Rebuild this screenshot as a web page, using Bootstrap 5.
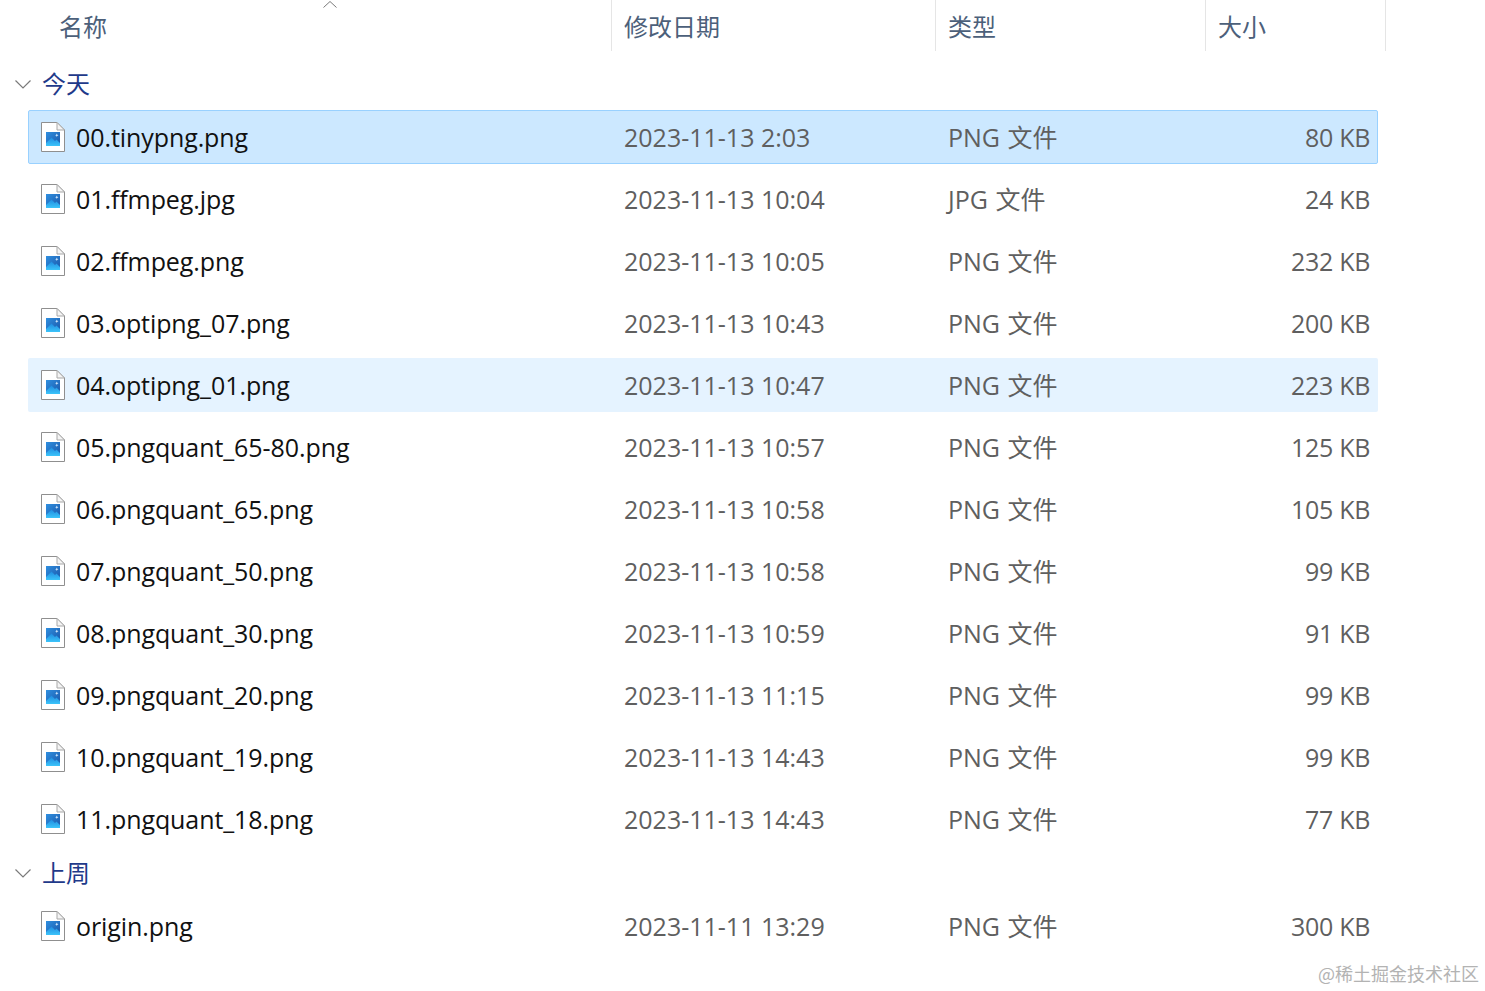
<!DOCTYPE html>
<html lang="zh"><head><meta charset="utf-8"><title>文件列表</title>
<link href="https://cdn.jsdelivr.net/npm/bootstrap@5.3.0/dist/css/bootstrap.min.css" rel="stylesheet">
<style>
html,body{height:100%;overflow:hidden}
body{background:#fff;font-family:"Open Sans","Noto Sans CJK SC",sans-serif;font-size:25px;position:relative}
.fx-head{height:51px;padding-left:28px;color:#4c607a;font-size:24px}
.fx-head>div{height:51px;padding-top:9px;line-height:36px;border-right:1px solid #e5e5e5}
.c-name{width:584px;padding-left:31px;position:relative}
.c-date{width:324px;padding-left:12px}
.c-type{width:270px;padding-left:12px}
.c-size{width:180px;padding-left:12px}
.fx-sort{position:absolute;left:295px;top:1px}
.fx-group{height:53px;color:#1f3a8a;font-size:24px;padding-left:15px;padding-top:1px;gap:11px;line-height:1}
.fx-first{height:59px;padding-top:7px}
.fx-rows{display:flex;flex-direction:column;gap:8px;margin-left:28px;width:1350px}
.fx-row{height:54px;border:1px solid transparent;border-radius:2px;color:#5f5f5f;font-size:25px}
.fx-sel{background:#cce8ff;border-color:#99d1ff}
.fx-hov{background:#e5f3ff}
.r-name{width:584px;padding-left:12px;gap:11px;color:#111;letter-spacing:-.08px}
.r-name span,.r-date,.r-type,.r-size{padding-top:2px}
.r-date{width:324px;padding-left:11px}
.r-type{width:270px;padding-left:11px;word-spacing:1px}
.r-size{width:170px;padding-right:7px;text-align:right;letter-spacing:-.3px}
.fx-mark{position:absolute;right:6px;bottom:6px;color:#b3b3b3;font-family:"Noto Sans CJK SC",sans-serif;font-size:18px;line-height:1.2}
</style></head><body>
<svg width="0" height="0" class="position-absolute"><defs>
<linearGradient id="sky" x1="0" y1="0" x2="1" y2="1"><stop offset="0" stop-color="#2f8fe0"/><stop offset="1" stop-color="#1a56a8"/></linearGradient>
<linearGradient id="hill" x1="0" y1="0" x2="0" y2="1"><stop offset="0" stop-color="#1f8be0"/><stop offset="1" stop-color="#3cc4fa"/></linearGradient>
<symbol id="fi" viewBox="0 0 24 30">
<path d="M.5.5H16L23.5 8V29.5H.5Z" fill="#fff" stroke="#8f8f8f"/><path d="M16 .5V8H23.5Z" fill="#f4f4f4" stroke="#a8a8a8"/>
<rect x="5" y="10" width="14" height="14" fill="url(#sky)"/><path d="M5 24V21L10.5 15.5L14 19L15.5 17.5L19 21V24Z" fill="url(#hill)"/><path d="M15.8 11.5l.5 1.2 1.2.5-1.2.5-.5 1.2-.5-1.2-1.2-.5 1.2-.5Z" fill="#d8ecff"/></symbol></defs></svg>
<div class="fx-head d-flex">
 <div class="c-name">名称<svg class="fx-sort" width="14" height="7" viewBox="0 0 14 7"><path d="M.5 6.5L7 .5L13.5 6.5" fill="none" stroke="#7a7a7a"/></svg></div>
 <div class="c-date">修改日期</div><div class="c-type">类型</div><div class="c-size">大小</div>
</div>
<div class="fx-group fx-first d-flex align-items-center"><svg width="16" height="9" viewBox="0 0 16 9"><path d="M.5.5L8 8L15.5.5" fill="none" stroke="#7a7a7a" stroke-width="1.2"/></svg><span>今天</span></div>
<div class="fx-rows" id="a"></div>
<div class="fx-group d-flex align-items-center"><svg width="16" height="9" viewBox="0 0 16 9"><path d="M.5.5L8 8L15.5.5" fill="none" stroke="#7a7a7a" stroke-width="1.2"/></svg><span>上周</span></div>
<div class="fx-rows" id="b"></div>
<div class="fx-mark">@稀土掘金技术社区</div>
<script>
const R=(n,d,t,s,c='')=>`<div class="fx-row d-flex align-items-center ${c}"><div class="r-name d-flex align-items-center"><svg width="24" height="30"><use href="#fi"/></svg><span>${n}</span></div><div class="r-date">${d}</div><div class="r-type">${t}</div><div class="r-size">${s}</div></div>`;
const P='PNG 文件',D='2023-11-13 ';
a.innerHTML=[['00.tinypng.png','2:03',P,'80 KB','fx-sel'],['01.ffmpeg.jpg','10:04','JPG 文件','24 KB'],['02.ffmpeg.png','10:05',P,'232 KB'],['03.optipng_07.png','10:43',P,'200 KB'],['04.optipng_01.png','10:47',P,'223 KB','fx-hov'],['05.pngquant_65-80.png','10:57',P,'125 KB'],['06.pngquant_65.png','10:58',P,'105 KB'],['07.pngquant_50.png','10:58',P,'99 KB'],['08.pngquant_30.png','10:59',P,'91 KB'],['09.pngquant_20.png','11:15',P,'99 KB'],['10.pngquant_19.png','14:43',P,'99 KB'],['11.pngquant_18.png','14:43',P,'77 KB']].map(r=>R(r[0],D+r[1],r[2],r[3],r[4])).join('');
b.innerHTML=R('origin.png','2023-11-11 13:29',P,'300 KB');
</script>
</body></html>
